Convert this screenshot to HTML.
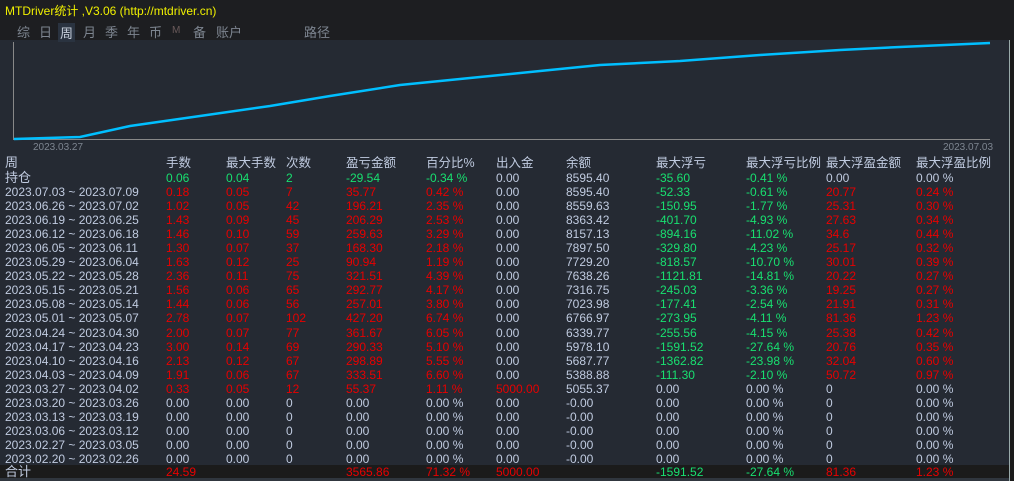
<!DOCTYPE html><html><head><meta charset="utf-8"><style>
body{margin:0;width:1014px;height:481px;overflow:hidden;background:#252a33;font-family:"Liberation Sans","Noto Sans CJK SC",sans-serif;position:relative}
.top{position:absolute;left:0;top:0;width:1014px;height:40px;background:#1d1e21}
.t{position:absolute;left:5px;top:2px;font-size:12px;color:#f0f000}
.tabs span{position:absolute;top:22px;font-size:13px;color:#7d8590}
.r{position:absolute;left:0;width:1009px;height:14px;font-size:12px;line-height:14px;color:#c0cbe0}
.r span{position:absolute;white-space:nowrap}
.g{color:#18e070}.d{color:#e80000}
</style></head><body>
<div class="top"><div class="t">MTDriver统计 ,V3.06 (http://mtdriver.cn)</div>
<div class="tabs"><span style="left:17px">综</span><span style="left:39px">日</span><span style="top:23px;background:#2a3340;color:#c8d0dc;padding:0 2px;left:58px">周</span><span style="left:83px">月</span><span style="left:105px">季</span><span style="left:127px">年</span><span style="left:149px">币</span><span style="left:172px;top:25px;font-size:10px;color:#6a5a5a">M</span><span style="left:193px">备</span><span style="left:216px">账户</span><span style="left:304px">路径</span></div></div>
<div style="position:absolute;left:1009px;top:40px;width:5px;height:441px;background:#1b1b1b;border-left:1px solid #9aa"></div>
<svg style="position:absolute;left:0;top:40px" width="1009" height="115">
<line x1="13.5" y1="2" x2="13.5" y2="99.5" stroke="#888"/><line x1="13" y1="99.5" x2="990" y2="99.5" stroke="#888"/>
<polyline fill="none" stroke="#00bfff" stroke-width="2.5" points="14,99 80,97 130,86 200,76 270,66 330,56 400,45 470,38 540,31 600,25 680,21 760,15 840,10 900,7 990,3"/>
<text x="33" y="110" font-size="10" fill="#7d8590" font-family="Liberation Sans">2023.03.27</text>
<text x="943" y="110" font-size="10" fill="#7d8590" font-family="Liberation Sans">2023.07.03</text>
</svg>
<div class="r" style="top:156px;font-size:12.5px"><span style="left:5px;font-size:13px">周</span><span style="left:166px">手数</span><span style="left:226px">最大手数</span><span style="left:286px">次数</span><span style="left:346px">盈亏金额</span><span style="left:426px">百分比%</span><span style="left:496px">出入金</span><span style="left:566px">余额</span><span style="left:656px">最大浮亏</span><span style="left:746px">最大浮亏比例</span><span style="left:826px">最大浮盈金额</span><span style="left:916px">最大浮盈比例</span></div>
<div class="r" style="top:171px"><span style="left:5px;font-size:13px">持仓</span><span class="g" style="left:166px">0.06</span><span class="g" style="left:226px">0.04</span><span class="g" style="left:286px">2</span><span class="g" style="left:346px">-29.54</span><span class="g" style="left:426px">-0.34 %</span><span style="left:496px">0.00</span><span style="left:566px">8595.40</span><span class="g" style="left:656px">-35.60</span><span class="g" style="left:746px">-0.41 %</span><span style="left:826px">0.00</span><span style="left:916px">0.00 %</span></div>
<div id="rows"></div>
<div class="r" style="top:465px;height:13px;background:#1b1b1b;width:1009px"><span style="left:5px;font-size:13px">合计</span><span class="d" style="left:166px">24.59</span><span class="d" style="left:346px">3565.86</span><span class="d" style="left:426px">71.32 %</span><span class="d" style="left:496px">5000.00</span><span class="g" style="left:656px">-1591.52</span><span class="g" style="left:746px">-27.64 %</span><span class="d" style="left:826px">81.36</span><span class="d" style="left:916px">1.23 %</span></div>
<div style="position:absolute;left:0;top:478px;width:1009px;height:3px;background:#30363e"></div>
<script>
var D=[["2023.07.03 ~ 2023.07.09","0.18","0.05","7","35.77","0.42 %","0.00","8595.40","-52.33","-0.61 %","20.77","0.24 %"],
["2023.06.26 ~ 2023.07.02","1.02","0.05","42","196.21","2.35 %","0.00","8559.63","-150.95","-1.77 %","25.31","0.30 %"],
["2023.06.19 ~ 2023.06.25","1.43","0.09","45","206.29","2.53 %","0.00","8363.42","-401.70","-4.93 %","27.63","0.34 %"],
["2023.06.12 ~ 2023.06.18","1.46","0.10","59","259.63","3.29 %","0.00","8157.13","-894.16","-11.02 %","34.6","0.44 %"],
["2023.06.05 ~ 2023.06.11","1.30","0.07","37","168.30","2.18 %","0.00","7897.50","-329.80","-4.23 %","25.17","0.32 %"],
["2023.05.29 ~ 2023.06.04","1.63","0.12","25","90.94","1.19 %","0.00","7729.20","-818.57","-10.70 %","30.01","0.39 %"],
["2023.05.22 ~ 2023.05.28","2.36","0.11","75","321.51","4.39 %","0.00","7638.26","-1121.81","-14.81 %","20.22","0.27 %"],
["2023.05.15 ~ 2023.05.21","1.56","0.06","65","292.77","4.17 %","0.00","7316.75","-245.03","-3.36 %","19.25","0.27 %"],
["2023.05.08 ~ 2023.05.14","1.44","0.06","56","257.01","3.80 %","0.00","7023.98","-177.41","-2.54 %","21.91","0.31 %"],
["2023.05.01 ~ 2023.05.07","2.78","0.07","102","427.20","6.74 %","0.00","6766.97","-273.95","-4.11 %","81.36","1.23 %"],
["2023.04.24 ~ 2023.04.30","2.00","0.07","77","361.67","6.05 %","0.00","6339.77","-255.56","-4.15 %","25.38","0.42 %"],
["2023.04.17 ~ 2023.04.23","3.00","0.14","69","290.33","5.10 %","0.00","5978.10","-1591.52","-27.64 %","20.76","0.35 %"],
["2023.04.10 ~ 2023.04.16","2.13","0.12","67","298.89","5.55 %","0.00","5687.77","-1362.82","-23.98 %","32.04","0.60 %"],
["2023.04.03 ~ 2023.04.09","1.91","0.06","67","333.51","6.60 %","0.00","5388.88","-111.30","-2.10 %","50.72","0.97 %"],
["2023.03.27 ~ 2023.04.02","0.33","0.05","12","55.37","1.11 %","5000.00","5055.37","0.00","0.00 %","0","0.00 %"]];
var z=["2023.03.20 ~ 2023.03.26","2023.03.13 ~ 2023.03.19","2023.03.06 ~ 2023.03.12","2023.02.27 ~ 2023.03.05","2023.02.20 ~ 2023.02.26"];
z.forEach(function(n){D.push([n,"0.00","0.00","0","0.00","0.00 %","0.00","-0.00","0.00","0.00 %","0","0.00 %"])});
var X=[5,166,226,286,346,426,496,566,656,746,826,916],h="";
D.forEach(function(r,i){var z=i>=15;h+='<div class="r" style="top:'+(185+i*14.05)+'px">';
r.forEach(function(v,j){var c="";if(!z){if(j>=1&&j<=5)c="d";if(j==8||j==9)c="g";if(j>=10)c="d";}
if(i==14){if(j==6)c="d";if(j>=8)c="";}
h+='<span class="'+c+'" style="left:'+X[j]+'px">'+v+'</span>'});h+='</div>'});
document.getElementById("rows").innerHTML=h;
</script>
</body></html>
